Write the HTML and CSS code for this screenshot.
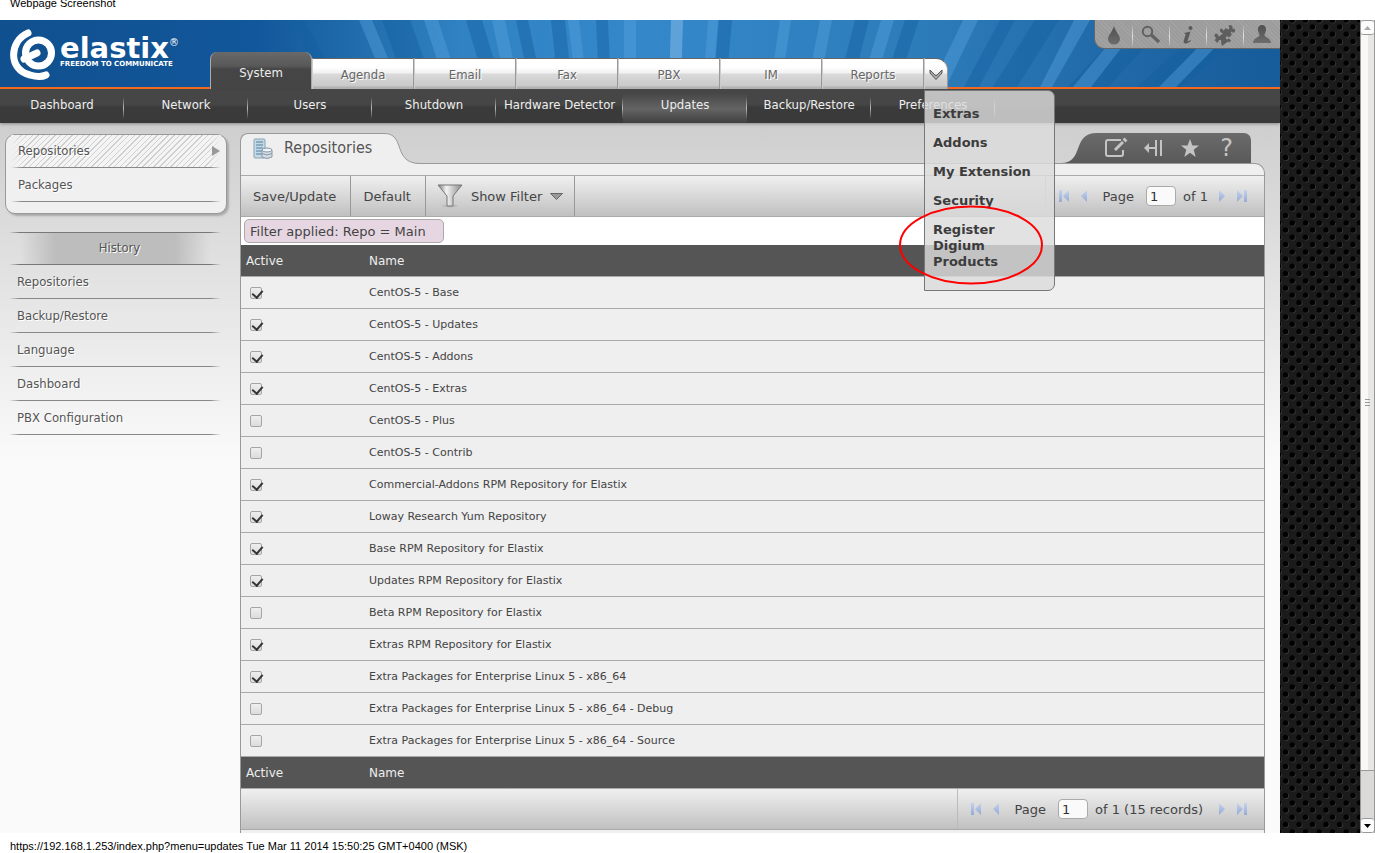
FILE: index.html
```html
<!DOCTYPE html>
<html lang="en">
<head>
<meta charset="utf-8">
<title>Elastix</title>
<link rel="stylesheet" href="styles.css">
</head>
<body>
<svg class="defs" aria-hidden="true">
  <defs>
    <linearGradient id="steel" x1="0" y1="0" x2="1" y2="0"><stop offset="0" stop-color="#777"/><stop offset=".35" stop-color="#f4f4f4"/><stop offset="1" stop-color="#888"/></linearGradient>
    <linearGradient id="arrow" x1="0" y1="0" x2="0" y2="1"><stop offset="0" stop-color="#c6d3ee"/><stop offset="1" stop-color="#94a9d6"/></linearGradient>
    <linearGradient id="glyph" x1="0" y1="0" x2="0" y2="1"><stop offset="0" stop-color="#505050"/><stop offset="1" stop-color="#6c6c6c"/></linearGradient>
    <linearGradient id="slate" x1="0" y1="0" x2="0" y2="1"><stop offset="0" stop-color="#6b6b6b"/><stop offset="1" stop-color="#595959"/></linearGradient>
    <linearGradient id="sky" x1="0" y1="0" x2="1" y2="0"><stop offset="0" stop-color="#10508f"/><stop offset=".2" stop-color="#12579b"/><stop offset=".27" stop-color="#1f6aab"/><stop offset=".36" stop-color="#3082c2"/><stop offset=".5" stop-color="#3488ca"/><stop offset=".72" stop-color="#2d7cba"/><stop offset=".87" stop-color="#2169a8"/><stop offset="1" stop-color="#165b9a"/></linearGradient>
    <pattern id="mesh" width="27" height="29" patternUnits="userSpaceOnUse">
      <rect width="27" height="29" fill="#1b1b1b"/>
      <g fill="#3a3a3a"><circle cx="6.200" cy="7.600" r="2.800"/><circle cx="19.700" cy="7.600" r="2.800"/><circle cx="6.200" cy="22.100" r="2.800"/><circle cx="19.700" cy="22.100" r="2.800"/><circle cx="12.900" cy="14.800" r="2.800"/><circle cx="26.200" cy="14.800" r="2.800"/><circle cx="-.8" cy="14.800" r="2.800"/><circle cx="12.900" cy=".6" r="2.800"/><circle cx="26.200" cy=".6" r="2.800"/><circle cx="-.8" cy=".6" r="2.800"/></g>
      <g fill="#000"><circle cx="5.500" cy="7" r="2.700"/><circle cx="19" cy="7" r="2.700"/><circle cx="5.500" cy="21.500" r="2.700"/><circle cx="19" cy="21.500" r="2.700"/><circle cx="12.200" cy="14.200" r="2.700"/><circle cx="25.500" cy="14.200" r="2.700"/><circle cx="-1.500" cy="14.200" r="2.700"/><circle cx="12.200" cy="0" r="2.700"/><circle cx="25.500" cy="0" r="2.700"/><circle cx="-1.500" cy="0" r="2.700"/><circle cx="12.200" cy="29" r="2.700"/><circle cx="25.500" cy="29" r="2.700"/><circle cx="-1.500" cy="29" r="2.700"/></g>
    </pattern>
    <symbol id="first" viewBox="0 0 12 12"><path d="M1 0h3v12H1zM11 0v12L5 6z" fill="url(#arrow)"/></symbol>
    <symbol id="prev" viewBox="0 0 12 12"><path d="M9 0v12L3 6z" fill="url(#arrow)"/></symbol>
    <symbol id="next" viewBox="0 0 12 12"><path d="M3 0v12l6-6z" fill="url(#arrow)"/></symbol>
    <symbol id="last" viewBox="0 0 12 12"><path d="M8 0h3v12H8zM1 0v12l6-6z" fill="url(#arrow)"/></symbol>
  </defs>
</svg>

<div class="caption">Webpage Screenshot</div>

<div class="window">
  <div class="app">
    <header class="banner">
      <svg class="rays" viewBox="0 0 1280 67" preserveAspectRatio="none" aria-hidden="true">
        <rect width="1280" height="67" fill="url(#sky)"/>
        <g fill="#15609f" opacity=".45">
          <path d="M290 0h14l36 67h-14zM382 0h28l24 67h-28zM466 0h16l20 67h-16zM516 0h12l14 67h-12zM551 0h14l7 67h-14zM596 0h12l3 67h-12zM719 0h13l-6 67h-13zM855 0h14l-17 67h-14zM905 0h14l-22 67h-14zM1000 0h15l-36 67h-15zM1035 0h24l-42 67h-24zM1130 0h40l-62 67h-40zM1210 0h50l-78 67h-44z"/>
        </g>
        <g fill="#5aa6e0" opacity=".4">
          <path d="M359 0h13l28 67h-13zM424 0h14l22 67h-14zM492 0h13l14 67h-13zM568 0h11l8 67h-11zM624 0h12v67h-12zM671 0h12l-2 67h-12zM708 0h10l-5 67h-10zM780 0h11l-10 67h-11zM820 0h12l-13 67h-12zM881 0h13l-20 67h-13zM963 0h15l-32 67h-15zM1074 0h16l-38 67h-12zM1128 0h15l-52 67h-18zM1225 0h17l-66 67h-17z"/>
        </g>
        <path d="M671 0h12l-2 67h-12z" fill="#b5d5ef" opacity=".25"/>
      </svg>
      <a class="logo" href="#" aria-label="elastix">
        <svg width="46" height="52" viewBox="0 0 46 52" fill="none" stroke="#fff" aria-hidden="true">
          <path d="M18 5C-1 13-2 42 20 47q10 3 16 0" stroke-width="7" stroke-linecap="round"/>
          <circle cx="28" cy="25" r="17.500" fill="#11508f" stroke="none"/>
          <circle cx="28.500" cy="25" r="13" stroke-width="7"/>
          <path d="M14 31l13-6" stroke-width="7" stroke-linecap="round"/>
        </svg>
        <span class="logo-words"><span class="logo-name">elastix<sup>®</sup></span><span class="logo-tag">FREEDOM TO COMMUNICATE</span></span>
      </a>
      <nav class="tabs" aria-label="Main">
        <a class="tab current" href="#">System</a><a class="tab" href="#">Agenda</a><a class="tab" href="#">Email</a><a class="tab" href="#">Fax</a><a class="tab" href="#">PBX</a><a class="tab" href="#">IM</a><a class="tab" href="#">Reports</a>
        <div class="more">
          <button class="more-button" aria-label="More"><svg width="14" height="11" viewBox="0 0 14 11"><path d="M1 1l6 6 6-6v3L7 10.500 1 4z" fill="#aaa" stroke="#555" stroke-width="1"/></svg></button>
          <div class="menu">
            <a href="#">Extras</a><a href="#">Addons</a><a href="#">My Extension</a><a href="#">Security</a><a href="#">Register Digium Products</a>
            <svg class="mark" width="146" height="80" viewBox="0 0 146 80" aria-hidden="true"><ellipse cx="73" cy="40" rx="71" ry="38.500" fill="none" stroke="#f00" stroke-width="2"/></svg>
          </div>
        </div>
      </nav>
      <div class="tools">
        <button aria-label="Theme"><svg width="24" height="24" viewBox="0 0 24 24"><path d="M12 3c1 5 6 9 6 13a6 5.500 0 0 1-12 0c0-4 5-8 6-13z" fill="url(#glyph)"/></svg></button>
        <button aria-label="Search"><svg width="24" height="24" viewBox="0 0 24 24" fill="none" stroke="#616161"><circle cx="8.500" cy="8.500" r="4.700" stroke-width="2"/><path d="M12.500 12l7.500 7" stroke-width="3.200"/></svg></button>
        <button aria-label="Information"><svg width="24" height="24" viewBox="0 0 24 24" fill="#5a5a5a"><circle cx="14.500" cy="5" r="2"/><path d="M8.500 10l6-1.500-3 9.500q0 1 3-1l.5.800c-4 4-8.500 3.500-7.200-.3l2-6.500H8.500z"/></svg></button>
        <button aria-label="Addons"><svg width="24" height="24" viewBox="0 0 24 24" fill="#5e5e5e"><path d="M10 8l3-3q1.500 2 3 1 1-1.500-.5-3Q17 1 19 3q1.500 1.500 0 2.500 2-.5 3 1t-1 3q-1.500.5-3-1-1 1.500 1 3l-3 3q-2-2-3-.5t1 2.500l2-1 2 2-2 2-1-1-6 4.500-1-4q1-1.500-.5-2t-2 1l-1 2-3-3 2-2q-2-1-2-2.500t1.500-2T5 12l1 1.500 4-3-2-1q-2-2-.5-3.500T10 7z"/></svg></button>
        <button aria-label="User"><svg width="24" height="24" viewBox="0 0 24 24"><path d="M12 2c3 0 4.500 2.500 4 5.500-.3 2-1.500 3-1.500 5 0 1.500 6.500 2.500 6.500 7.500H3c0-5 6.500-6 6.500-7.500 0-2-1.200-3-1.500-5C7.500 4.500 9 2 12 2z" fill="url(#glyph)"/></svg></button>
      </div>
    </header>

    <nav class="subnav" aria-label="System">
      <a href="#">Dashboard</a><a href="#">Network</a><a href="#">Users</a><a href="#">Shutdown</a><a href="#">Hardware Detector</a><a class="current" href="#">Updates</a><a href="#">Backup/Restore</a><a href="#">Preferences</a>
    </nav>

    <div class="columns">
      <aside class="side">
        <nav class="card" aria-label="Updates">
          <a class="current" href="#">Repositories<svg width="8" height="10" viewBox="0 0 8 10" aria-hidden="true"><path d="M0 0l8 5-8 5z" fill="#999"/></svg></a>
          <a href="#">Packages</a>
        </nav>
        <nav class="history" aria-label="History">
          <h2>History</h2>
          <a href="#">Repositories</a><a href="#">Backup/Restore</a><a href="#">Language</a><a href="#">Dashboard</a><a href="#">PBX Configuration</a>
        </nav>
      </aside>

      <main class="content">
        <div class="heading">
          <div class="title">
            <svg class="title-end" width="44" height="31" viewBox="0 0 44 31" aria-hidden="true"><path d="M0 .5C22 0 8 30.500 36 30.500H44V31H0z" fill="#efefef"/><path d="M0 .5C22 0 8 30.500 36 30.500H44" fill="none" stroke="#999"/></svg>
            <svg width="20" height="22" viewBox="0 0 20 22" aria-hidden="true"><rect x="1" y="1" width="11" height="19" rx="1" fill="#c3d9e6" stroke="#8ba3b5"/><path d="M3 4h7M3 7h7M3 10h7M3 13h6M3 16h6" stroke="#557f9f"/><path d="M9 12v7q5 3 10 0v-7z" fill="#d5dde5" stroke="#8797a8"/><ellipse cx="14" cy="12" rx="5" ry="2" fill="#eff4f8" stroke="#8797a8"/><path d="M9 15.500q5 3 10 0" fill="none" stroke="#8797a8"/></svg>
            <h1>Repositories</h1>
          </div>
          <div class="actions">
            <svg class="actions-start" width="36" height="30" viewBox="0 0 36 30" aria-hidden="true"><path d="M36 0C10 0 24 30 0 30H36z" fill="url(#slate)"/></svg>
            <button aria-label="Edit"><svg width="24" height="22" viewBox="0 0 24 22" fill="none" stroke="#c4c4c4"><path d="M17 3H4Q2 3 2 5v12q0 2 2 2h13q2 0 2-2v-4" stroke-width="2"/><path d="M11 13l8-8" stroke-width="3"/><path d="M20 4l2-2" stroke-width="4"/></svg></button>
            <button aria-label="Collapse"><svg width="20" height="18" viewBox="0 0 20 18" fill="none" stroke="#c4c4c4" stroke-width="2"><path d="M13 1v16M18 1v16M2 9h10"/><path d="M6 4L1 9l5 5z" fill="#c4c4c4" stroke="none"/></svg></button>
            <button aria-label="Favorite"><svg width="20" height="18" viewBox="0 0 20 18"><path d="M10 0l2.400 6.500H19l-5.300 4.300L15.700 18 10 13.700 4.300 18l2-7.200L1 6.500h6.600z" fill="#c4c4c4"/></svg></button>
            <button aria-label="Help" class="help">?</button>
          </div>
        </div>
        <div class="panel">
          <div class="bar">
            <button class="bar-item">Save/Update</button><button class="bar-item">Default</button><button class="bar-item filter"><svg width="26" height="24" viewBox="0 0 26 24" aria-hidden="true"><ellipse cx="13" cy="22" rx="8" ry="1.500" fill="#bbb"/><path d="M1 1h24L16 12v10h-6V12z" fill="url(#steel)" stroke="#777"/></svg>Show Filter<svg width="13" height="7" viewBox="0 0 13 7" aria-hidden="true"><path d="M.5.5h12l-6 6z" fill="#999" stroke="#666"/></svg></button>
            <form class="pager">
              <button type="button" aria-label="First"><svg width="12" height="12"><use href="#first"/></svg></button>
              <button type="button" aria-label="Previous"><svg width="12" height="12"><use href="#prev"/></svg></button>
              <label for="page-top">Page</label><input id="page-top" type="text" value="1"><span>of 1</span>
              <button type="button" aria-label="Next"><svg width="12" height="12"><use href="#next"/></svg></button>
              <button type="button" aria-label="Last"><svg width="12" height="12"><use href="#last"/></svg></button>
            </form>
          </div>
          <div class="applied"><span>Filter applied: Repo = Main</span></div>
          <table>
            <thead><tr><th scope="col">Active</th><th scope="col">Name</th></tr></thead>
            <tfoot><tr><th>Active</th><th>Name</th></tr></tfoot>
            <tbody>
              <tr><td><input type="checkbox" id="r1" checked></td><td><label for="r1">CentOS-5 - Base</label></td></tr>
              <tr><td><input type="checkbox" id="r2" checked></td><td><label for="r2">CentOS-5 - Updates</label></td></tr>
              <tr><td><input type="checkbox" id="r3" checked></td><td><label for="r3">CentOS-5 - Addons</label></td></tr>
              <tr><td><input type="checkbox" id="r4" checked></td><td><label for="r4">CentOS-5 - Extras</label></td></tr>
              <tr><td><input type="checkbox" id="r5"></td><td><label for="r5">CentOS-5 - Plus</label></td></tr>
              <tr><td><input type="checkbox" id="r6"></td><td><label for="r6">CentOS-5 - Contrib</label></td></tr>
              <tr><td><input type="checkbox" id="r7" checked></td><td><label for="r7">Commercial-Addons RPM Repository for Elastix</label></td></tr>
              <tr><td><input type="checkbox" id="r8" checked></td><td><label for="r8">Loway Research Yum Repository</label></td></tr>
              <tr><td><input type="checkbox" id="r9" checked></td><td><label for="r9">Base RPM Repository for Elastix</label></td></tr>
              <tr><td><input type="checkbox" id="r10" checked></td><td><label for="r10">Updates RPM Repository for Elastix</label></td></tr>
              <tr><td><input type="checkbox" id="r11"></td><td><label for="r11">Beta RPM Repository for Elastix</label></td></tr>
              <tr><td><input type="checkbox" id="r12" checked></td><td><label for="r12">Extras RPM Repository for Elastix</label></td></tr>
              <tr><td><input type="checkbox" id="r13" checked></td><td><label for="r13">Extra Packages for Enterprise Linux 5 - x86_64</label></td></tr>
              <tr><td><input type="checkbox" id="r14"></td><td><label for="r14">Extra Packages for Enterprise Linux 5 - x86_64 - Debug</label></td></tr>
              <tr><td><input type="checkbox" id="r15"></td><td><label for="r15">Extra Packages for Enterprise Linux 5 - x86_64 - Source</label></td></tr>
            </tbody>
          </table>
          <div class="bar">
            <form class="pager">
              <button type="button" aria-label="First"><svg width="12" height="12"><use href="#first"/></svg></button>
              <button type="button" aria-label="Previous"><svg width="12" height="12"><use href="#prev"/></svg></button>
              <label for="page-bottom">Page</label><input id="page-bottom" type="text" value="1"><span class="total">of 1 (15 records)</span>
              <button type="button" aria-label="Next"><svg width="12" height="12"><use href="#next"/></svg></button>
              <button type="button" aria-label="Last"><svg width="12" height="12"><use href="#last"/></svg></button>
            </form>
          </div>
        </div>
      </main>
    </div>
  </div>

  <svg class="mesh" aria-hidden="true"><rect width="100%" height="100%" fill="url(#mesh)"/></svg>

  <div class="scroll">
    <button aria-label="Scroll up"><svg width="7" height="4" viewBox="0 0 7 4"><path d="M0 4l3.500-4L7 4z" fill="#aaa"/></svg></button>
    <div class="track"><div class="thumb"><i></i><i></i><i></i></div></div>
    <button aria-label="Scroll down"><svg width="7" height="4" viewBox="0 0 7 4"><path d="M0 0l3.500 4L7 0z" fill="#000"/></svg></button>
  </div>
</div>

<div class="caption caption-bottom">https://192.168.1.253/index.php?menu=updates Tue Mar 11 2014 15:50:25 GMT+0400 (MSK)</div>
</body>
</html>
```
FILE: styles.css
```css
* { box-sizing: border-box; }
body {
  margin: 0;
  height: 100vh;
  display: flex;
  flex-direction: column;
  overflow: hidden;
  background: #fff;
  color: #444;
  font: 13px "DejaVu Sans", sans-serif;
}
a { color: inherit; text-decoration: none; }
button { border: 0; padding: 0; background: none; font: inherit; color: inherit; }
svg { display: block; flex: none; }
.defs { position: absolute; width: 0; height: 0; }

.caption {
  height: 20px;
  padding-left: 10px;
  font: 11px/6px "Liberation Sans", sans-serif;
  color: #000;
}
.caption-bottom { line-height: 27px; }

.window { flex: 1; min-height: 0; display: flex; overflow: hidden; }
.app {
  flex: 1;
  min-width: 0;
  background: linear-gradient(#cecece 100px, #fafafa 440px);
}
.mesh { width: 80px; height: 100%; }

/* banner */
.banner {
  position: relative;
  z-index: 2;
  display: flex;
  align-items: flex-end;
  height: 69px;
  border-bottom: 2px solid #f26a21;
  background: #12579b;
}
.rays { position: absolute; inset: 0; width: 100%; height: 100%; }
.logo { position: relative; width: 210px; height: 67px; padding: 8px 0 0 10px; display: flex; gap: 4px; color: #fff; }
.logo-words { display: flex; flex-direction: column; padding-top: 8px; }
.logo-name { font: bold 29px/24px "DejaVu Sans", sans-serif; height: 24px; white-space: nowrap; }
.logo-name sup { font: 10px/1px "DejaVu Sans", sans-serif; vertical-align: 12px; }
.logo-tag { font: bold 7px/8px "DejaVu Sans", sans-serif; white-space: nowrap; }
.tabs {
  position: relative;
  display: flex;
  align-items: flex-end;
  margin-bottom: -2px;
  font: 13px "DejaVu Sans Condensed", "DejaVu Sans", sans-serif;
}
.tab {
  width: 102px;
  height: 31px;
  padding-top: 1px;
  line-height: 30px;
  text-align: center;
  color: #666;
  text-shadow: 1px 1px #fff;
  border-top: 1px solid #666;
  border-right: 1px solid #999;
  border-left: 1px solid #ccc;
  background: linear-gradient(#fff 8px, #f1f1f1 14px, #dadada 15px, #c9c9c9 27px, #b2b2b2 28px);
}
.tab.current {
  height: 37px;
  line-height: 42px;
  padding: 0;
  color: #eee;
  text-shadow: none;
  border: solid #aaa;
  border-width: 0 1px;
  border-radius: 7px 7px 0 0;
  background: linear-gradient(#696969, #585858 14px, #464646 17px, #444);
}
.more { position: relative; }
.more-button {
  width: 24px;
  height: 31px;
  display: grid;
  place-items: center;
  border-top: 1px solid #666;
  border-right: 1px solid #999;
  border-left: 1px solid #ccc;
  border-radius: 0 12px 0 0;
  background: linear-gradient(#fff 8px, #f1f1f1 14px, #dadada 15px, #c9c9c9 27px, #b2b2b2 28px);
}
.menu {
  position: absolute;
  top: 32px;
  left: 0;
  width: 131px;
  padding: 15px 8px 20px;
  display: flex;
  flex-direction: column;
  gap: 13px;
  border: 1px solid #777;
  border-radius: 0 7px 7px 0;
  background: rgba(220, 220, 220, .82);
  font: bold 13px/16px "DejaVu Sans", sans-serif;
  color: #3c3c3c;
}
.menu a { white-space: nowrap; }
.menu a:last-of-type { width: 80px; white-space: normal; }
.mark { position: absolute; top: 114px; left: -27px; }

.tools {
  position: relative;
  display: flex;
  align-self: flex-start;
  height: 29px;
  margin-left: auto;
  border-bottom: 1px solid #666;
  border-left: 1px solid #666;
  border-radius: 0 0 0 10px;
  background: repeating-linear-gradient(45deg, #a3a3a3 0 1px, #9c9c9c 1px 3px);
}
.tools button { width: 37px; display: grid; place-items: center; position: relative; padding-top: 2px; }
.tools button + button::before {
  content: "";
  position: absolute;
  left: 0;
  top: 6px;
  width: 1px;
  height: 20px;
  background: linear-gradient(#aaa, #e4e4e4, #aaa);
}

/* section bar */
.subnav {
  display: flex;
  height: 34px;
  background: linear-gradient(#464646 15px, #3a3a3a 19px);
  box-shadow: 0 1px 3px #888;
  color: #eee;
  font: 13px/31px "DejaVu Sans Condensed", "DejaVu Sans", sans-serif;
}
.subnav a {
  min-width: 124px;
  padding: 0 8px;
  text-align: center;
  white-space: nowrap;
  background: linear-gradient(transparent, #bbb 50%, transparent) right 8px / 1px 22px no-repeat;
}
.subnav a.current {
  background: linear-gradient(transparent, #bbb 50%, transparent) right 8px / 1px 22px no-repeat,
    linear-gradient(#464646 4px, #646464 20px, #404040);
}

/* side column */
.columns { display: flex; align-items: flex-start; padding-top: 10px; }
.side { width: 240px; padding: 1px 13px 0 5px; font: 13px "DejaVu Sans Condensed", "DejaVu Sans", sans-serif; color: #555; text-shadow: 1px 1px #fff; }
.card {
  height: 80px;
  padding: 0 5px;
  border: 1px solid #999;
  border-radius: 10px;
  background: #f0f0f0;
  box-shadow: 2px 2px 2px #aaa;
}
.card a, .history a {
  display: flex;
  align-items: center;
  justify-content: space-between;
  height: 34px;
  padding: 0 1px 2px 7px;
  background: linear-gradient(90deg, transparent, #888 5%, #888 95%, transparent) bottom / 100% 1px no-repeat;
}
.card a.current {
  height: 33px;
  background: linear-gradient(90deg, transparent, #888 5%, #888 95%, transparent) bottom / 100% 1px no-repeat,
    linear-gradient(90deg, #f0f0f0, transparent 6%, transparent 94%, #f0f0f0),
    repeating-linear-gradient(135deg, #f4f4f4 0 3px, #cfcfcf 3px 4px);
}
.history { margin-top: 18px; padding: 0 6px 0 4px; }
.history h2 {
  height: 33px;
  margin: 0;
  padding-left: 9px;
  font: inherit;
  line-height: 31px;
  text-align: center;
  background: linear-gradient(90deg, transparent, #777 5%, #777 95%, transparent) bottom / 100% 1px no-repeat,
    linear-gradient(90deg, transparent, #777 5%, #777 95%, transparent) top / 100% 1px no-repeat,
    linear-gradient(90deg, transparent 5%, #bdbdbd 22%, #bdbdbd 78%, transparent 95%);
}
.history a { padding-left: 8px; }

/* content */
.content { flex: 1; min-width: 0; padding-right: 15px; }
.heading { display: flex; justify-content: space-between; height: 31px; }
.title {
  position: relative;
  z-index: 1;
  width: 144px;
  height: 31px;
  padding: 0 0 1px 12px;
  display: flex;
  align-items: center;
  gap: 11px;
  border: solid #999;
  border-width: 1px 0 0 1px;
  border-radius: 8px 0 0 0;
  background: #efefef;
}
.title-end { position: absolute; top: -1px; left: 100%; }
.title h1 { margin: 0; padding-bottom: 2px; font: 16px/24px "DejaVu Sans Condensed", "DejaVu Sans", sans-serif; color: #555; }
.actions {
  position: relative;
  display: flex;
  height: 30px;
  margin-right: 14px;
  padding: 0 6px 0 0;
  border-radius: 0 7px 0 0;
  background: linear-gradient(#6b6b6b, #595959);
}
.actions-start { position: absolute; right: 100%; top: 0; }
.actions button { width: 37px; display: grid; place-items: center; }
.actions .help { font-size: 24px; line-height: 28px; color: #c4c4c4; }
.panel {
  margin-top: -1px;
  padding-top: 11px;
  border: 1px solid #999;
  border-bottom: 0;
  border-radius: 0 10px 0 0;
  background: #efefef;
  min-height: 700px;
}
.bar {
  display: flex;
  height: 42px;
  border: solid #aaa;
  border-width: 1px 0;
  background: linear-gradient(#f0f0f0, #c0c0c0);
  color: #444;
}
.bar-item { padding: 0 14px 0 12px; border-right: 1px solid #999; }
.filter { display: flex; align-items: center; gap: 8px; padding: 0 11px; }
.pager { display: flex; align-items: center; margin-left: auto; padding: 0 16px 0 12px; border-left: 1px solid #bbb; }
.pager button { margin-right: 8px; }
.pager button:last-child { margin: 0; }
.pager label { margin: 0 12px 0 5px; }
.pager input {
  width: 30px;
  height: 20px;
  margin-right: 7px;
  padding: 0 3px;
  border: 1px solid #aaa;
  border-radius: 4px;
  background: #fafafa;
  font: 13px "DejaVu Sans", sans-serif;
  color: #333;
}
.pager span { margin-right: 8px; white-space: nowrap; }
.pager .total { min-width: 113px; }
.applied { height: 28px; padding: 2px 3px; background: #fff; }
.applied span {
  display: inline-block;
  height: 24px;
  padding: 0 17px 0 5px;
  line-height: 23px;
  border: 1px solid #aaa;
  border-radius: 5px;
  background: #e6d6e1;
}
table { width: 100%; border-collapse: separate; border-spacing: 0; }
th {
  height: 31px;
  padding: 0 5px;
  background: #555;
  color: #eee;
  text-align: left;
  font: 12px "DejaVu Sans", sans-serif;
}
thead th { height: 32px; border-bottom: 1px solid #aaa; }
th:first-child { width: 123px; }
td {
  height: 32px;
  padding: 0 5px;
  border-bottom: 1px solid #aaa;
  font-size: 11px;
}
td:first-child { padding-left: 9px; }
td input {
  appearance: none;
  display: block;
  width: 12px;
  height: 12px;
  margin: 0;
  border: 1px solid #a5a5a5;
  border-radius: 2px;
  background: linear-gradient(#eee, #dcdcdc);
}
td input:checked::before {
  content: "";
  display: block;
  width: 5px;
  height: 8px;
  margin-left: 3px;
  border: solid #333;
  border-width: 0 2px 2px 0;
  transform: rotate(40deg);
}

/* window scrollbar */
.scroll { width: 15px; display: flex; flex-direction: column; background: #dcdad8; border: solid #999; border-width: 0 1px; }
.scroll button { height: 15px; display: grid; place-items: center; background: #fcfcfc; border: solid #999; border-width: 1px 0; border-radius: 3px; }
.track { flex: 1; display: flex; flex-direction: column; }
.thumb {
  flex: 0 0 94%;
  display: flex;
  flex-direction: column;
  align-items: center;
  justify-content: center;
  gap: 2px;
  border-bottom: 1px solid #999;
  background: linear-gradient(90deg, #f8f8f7 50%, #e8e7e6 50%);
}
.thumb i { width: 5px; height: 1px; background: #999; }
```
